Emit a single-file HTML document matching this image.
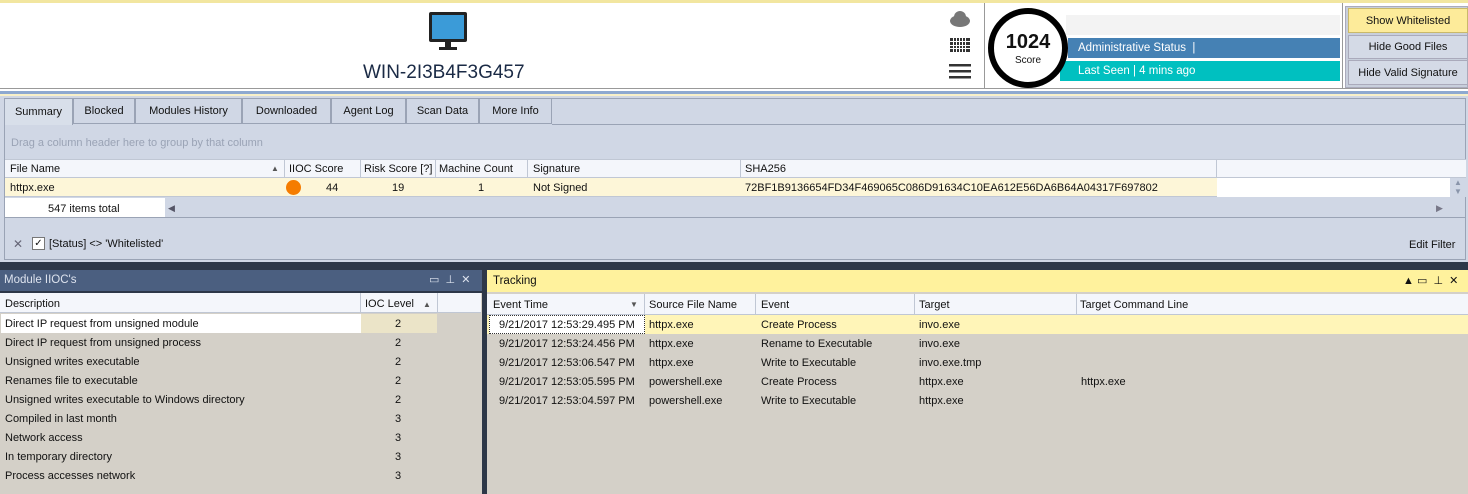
<!DOCTYPE html><html><head><style>
*{margin:0;padding:0;box-sizing:border-box}
body{width:1468px;height:494px;overflow:hidden;background:#2d3748;font-family:"Liberation Sans",sans-serif;font-size:11px;color:#111;position:relative}
div,span{position:absolute;white-space:nowrap}
.t{line-height:19px;padding-top:1px}
</style></head><body>
<div style="left:0;top:0;width:1468px;height:92px;background:#fff"></div>
<div style="left:0;top:0;width:1468px;height:3px;background:#f2e6a0"></div>
<div style="left:0;top:88px;width:1468px;height:1px;background:#999"></div>
<div style="left:0;top:91px;width:1468px;height:3px;background:#8ea9d0"></div>
<svg style="position:absolute;left:427px;top:11px" width="42" height="42"><rect x="2" y="1" width="38" height="30" rx="2" fill="#222"/><rect x="5" y="4" width="32" height="24" fill="#3b9bd8"/><rect x="18" y="31" width="6" height="6" fill="#222"/><rect x="12" y="36" width="18" height="3" fill="#222"/></svg>
<div style="left:363px;top:62px;font-size:19px;color:#1a2a45">WIN-2I3B4F3G457</div>
<svg style="position:absolute;left:948px;top:10px" width="24" height="72"><ellipse cx="12" cy="11" rx="10" ry="6" fill="#777"/><circle cx="12" cy="7" r="6" fill="#777"/><g fill="#333"><rect x="2" y="28" width="20" height="14"/></g><g stroke="#fff" stroke-width="1"><line x1="5.5" y1="28" x2="5.5" y2="42"/><line x1="8.5" y1="28" x2="8.5" y2="42"/><line x1="11.5" y1="28" x2="11.5" y2="42"/><line x1="14.5" y1="28" x2="14.5" y2="42"/><line x1="17.5" y1="28" x2="17.5" y2="42"/><line x1="2" y1="31.5" x2="22" y2="31.5"/><line x1="2" y1="35.5" x2="22" y2="35.5"/><line x1="2" y1="38.5" x2="22" y2="38.5"/></g><g fill="#333"><rect x="1" y="54" width="22" height="2.5"/><rect x="1" y="60" width="22" height="2.5"/><rect x="1" y="66" width="22" height="2.5"/></g></svg>
<div style="left:984px;top:3px;width:1px;height:86px;background:#999"></div>
<div style="left:1066px;top:15px;width:274px;height:20px;background:#f3f3f3"></div>
<div style="left:1068px;top:38px;width:272px;height:20px;background:#4581b4;color:#fff;font-size:11.5px;padding-left:10px;line-height:20px">Administrative Status &nbsp;|</div>
<div style="left:1060px;top:61px;width:280px;height:20px;background:#00c0c0;color:#fff;font-size:11.5px;padding-left:18px;line-height:20px">Last Seen | 4 mins ago</div>
<div style="left:988px;top:8px;width:80px;height:80px;border-radius:50%;background:#fff;border:6px solid #000"></div>
<div style="left:988px;top:31px;width:80px;text-align:center;font-size:20px;font-weight:bold">1024</div>
<div style="left:988px;top:55px;width:80px;text-align:center;font-size:10px">Score</div>
<div style="left:1342px;top:3px;width:1px;height:86px;background:#999"></div>
<div style="left:1345px;top:6px;width:123px;height:82px;background:#c8cfdc;border:1px solid #aab"></div>
<div style="left:1348px;top:8px;width:120px;height:25px;background:#fdeb9a;border:1px solid #c9b96a;text-align:center;line-height:24px">Show Whitelisted</div>
<div style="left:1348px;top:35px;width:120px;height:24px;background:#d4dae6;border:1px solid #aab;text-align:center;line-height:23px">Hide Good Files</div>
<div style="left:1348px;top:60px;width:120px;height:25px;background:#d4dae6;border:1px solid #aab;text-align:center;line-height:24px">Hide Valid Signature</div>
<div style="left:0;top:94px;width:1468px;height:168px;background:#d0d7e5"></div>
<div style="left:0;top:94px;width:1468px;height:2px;background:#f8f0c8"></div>
<div style="left:4px;top:98px;width:1462px;height:162px;border:1px solid #9aa3b5"></div>
<div style="left:5px;top:99px;width:68px;height:26px;background:#d8dfea;border-right:1px solid #9aa3b5;text-align:center;line-height:26px">Summary</div>
<div style="left:73px;top:99px;width:62px;height:25px;border:1px solid #9aa3b5;border-top:none;text-align:center;line-height:25px">Blocked</div>
<div style="left:135px;top:99px;width:107px;height:25px;border:1px solid #9aa3b5;border-top:none;text-align:center;line-height:25px">Modules History</div>
<div style="left:242px;top:99px;width:89px;height:25px;border:1px solid #9aa3b5;border-top:none;text-align:center;line-height:25px">Downloaded</div>
<div style="left:331px;top:99px;width:75px;height:25px;border:1px solid #9aa3b5;border-top:none;text-align:center;line-height:25px">Agent Log</div>
<div style="left:406px;top:99px;width:73px;height:25px;border:1px solid #9aa3b5;border-top:none;text-align:center;line-height:25px">Scan Data</div>
<div style="left:479px;top:99px;width:73px;height:25px;border:1px solid #9aa3b5;border-top:none;text-align:center;line-height:25px">More Info</div>
<div style="left:552px;top:124px;width:914px;height:1px;background:#9aa3b5"></div>
<div style="left:11px;top:137px;color:#9aa3b5">Drag a column header here to group by that column</div>
<div style="left:5px;top:159px;width:1461px;height:19px;background:#f4f6fb;border-top:1px solid #c0c7d4;border-bottom:1px solid #c0c7d4"></div>
<div class="t" style="left:10px;top:159px">File Name</div><div style="left:271px;top:159px;line-height:19px;font-size:8px;color:#555">▲</div>
<div style="left:284px;top:159px;width:1px;height:19px;background:#c0c7d4"></div><div class="t" style="left:289px;top:159px">IIOC Score</div>
<div style="left:360px;top:159px;width:1px;height:19px;background:#c0c7d4"></div><div class="t" style="left:364px;top:159px">Risk Score [?]</div>
<div style="left:435px;top:159px;width:1px;height:19px;background:#c0c7d4"></div><div class="t" style="left:439px;top:159px">Machine Count</div>
<div style="left:527px;top:159px;width:1px;height:19px;background:#c0c7d4"></div><div class="t" style="left:533px;top:159px">Signature</div>
<div style="left:740px;top:159px;width:1px;height:19px;background:#c0c7d4"></div><div class="t" style="left:745px;top:159px">SHA256</div>
<div style="left:1216px;top:159px;width:1px;height:19px;background:#c0c7d4"></div>
<div style="left:5px;top:178px;width:1212px;height:19px;background:#fdf6d8;border-bottom:1px solid #c0c7d4"></div>
<div style="left:1217px;top:178px;width:233px;height:19px;background:#fff"></div>
<div style="left:1450px;top:178px;width:16px;height:19px;background:#d0d7e5;color:#8a95aa;font-size:8px;line-height:9px;text-align:center">▲<br>▼</div>
<div class="t" style="left:10px;top:178px">httpx.exe</div>
<div style="left:286px;top:180px;width:15px;height:15px;border-radius:50%;background:#f57c00"></div>
<div class="t" style="left:326px;top:178px">44</div>
<div class="t" style="left:392px;top:178px">19</div>
<div class="t" style="left:478px;top:178px">1</div>
<div class="t" style="left:533px;top:178px">Not Signed</div>
<div class="t" style="left:745px;top:178px">72BF1B9136654FD34F469065C086D91634C10EA612E56DA6B64A04317F697802</div>
<div style="left:5px;top:198px;width:160px;height:19px;background:#fff"></div>
<div class="t" style="left:48px;top:199px">547 items total</div>
<div style="left:168px;top:199px;color:#556;font-size:9px;line-height:19px">◀</div>
<div style="left:1436px;top:199px;color:#778;font-size:9px;line-height:19px">▶</div>
<div style="left:5px;top:217px;width:1461px;height:1px;background:#9aa3b5"></div>
<div class="t" style="left:13px;top:234px;color:#667;font-size:12px">✕</div>
<div style="left:32px;top:237px;width:13px;height:13px;background:#fff;border:1px solid #777;font-size:10px;line-height:11px;text-align:center">✓</div>
<div class="t" style="left:49px;top:234px">[Status] &lt;&gt; 'Whitelisted'</div>
<div class="t" style="left:1409px;top:235px">Edit Filter</div>
<div style="left:0;top:270px;width:482px;height:21px;background:#4b5f80;color:#dde3ee;font-size:11.5px;line-height:21px;padding-left:4px">Module IIOC's</div>
<div style="left:429px;top:270px;color:#dde3ee;line-height:21px;font-size:11px">▭ &nbsp;⊥ &nbsp;✕</div>
<div style="left:0;top:293px;width:482px;height:201px;background:#d4d0c8"></div>
<div style="left:0;top:293px;width:481px;height:20px;background:#f4f6fb;border-bottom:1px solid #c0c7d4"></div>
<div class="t" style="left:5px;top:294px">Description</div>
<div style="left:360px;top:293px;width:1px;height:20px;background:#c0c7d4"></div><div class="t" style="left:365px;top:294px">IOC Level</div><div style="left:423px;top:295px;font-size:8px;line-height:19px;color:#555">▲</div>
<div style="left:437px;top:293px;width:1px;height:20px;background:#c0c7d4"></div>
<div style="left:1px;top:314px;width:360px;height:19px;background:#fff"></div>
<div style="left:361px;top:314px;width:76px;height:19px;background:#ebe4c8"></div>
<div style="left:0;top:314px;width:437px">
<div class="t" style="left:5px;top:0">Direct IP request from unsigned module</div><div class="t" style="left:395px;top:0">2</div>
<div class="t" style="left:5px;top:19px">Direct IP request from unsigned process</div><div class="t" style="left:395px;top:19px">2</div>
<div class="t" style="left:5px;top:38px">Unsigned writes executable</div><div class="t" style="left:395px;top:38px">2</div>
<div class="t" style="left:5px;top:57px">Renames file to executable</div><div class="t" style="left:395px;top:57px">2</div>
<div class="t" style="left:5px;top:76px">Unsigned writes executable to Windows directory</div><div class="t" style="left:395px;top:76px">2</div>
<div class="t" style="left:5px;top:95px">Compiled in last month</div><div class="t" style="left:395px;top:95px">3</div>
<div class="t" style="left:5px;top:114px">Network access</div><div class="t" style="left:395px;top:114px">3</div>
<div class="t" style="left:5px;top:133px">In temporary directory</div><div class="t" style="left:395px;top:133px">3</div>
<div class="t" style="left:5px;top:152px">Process accesses network</div><div class="t" style="left:395px;top:152px">3</div>
</div>
<div style="left:487px;top:270px;width:981px;height:22px;background:#fff29d;font-size:11.5px;line-height:22px;padding-left:6px">Tracking</div>
<div style="left:1403px;top:270px;line-height:22px;font-size:11px">▲ ▭ &nbsp;⊥ &nbsp;✕</div>
<div style="left:487px;top:292px;width:981px;height:202px;background:#d4d0c8"></div>
<div style="left:487px;top:294px;width:981px;height:21px;background:#f4f6fb;border-bottom:1px solid #c0c7d4"></div>
<div class="t" style="left:493px;top:295px">Event Time</div><div style="left:630px;top:295px;font-size:8px;line-height:19px;color:#555">▼</div>
<div style="left:644px;top:294px;width:1px;height:21px;background:#c0c7d4"></div><div class="t" style="left:649px;top:295px">Source File Name</div>
<div style="left:755px;top:294px;width:1px;height:21px;background:#c0c7d4"></div><div class="t" style="left:761px;top:295px">Event</div>
<div style="left:914px;top:294px;width:1px;height:21px;background:#c0c7d4"></div><div class="t" style="left:919px;top:295px">Target</div>
<div style="left:1076px;top:294px;width:1px;height:21px;background:#c0c7d4"></div><div class="t" style="left:1080px;top:295px">Target Command Line</div>
<div style="left:487px;top:315px;width:981px;height:19px;background:#fff5b8"></div>
<div style="left:489px;top:315px;width:156px;height:19px;background:#fff;border:1px dotted #333"></div>
<div style="left:487px;top:315px;width:981px">
<div class="t" style="left:12px;top:0">9/21/2017 12:53:29.495 PM</div><div class="t" style="left:162px;top:0">httpx.exe</div><div class="t" style="left:274px;top:0">Create Process</div><div class="t" style="left:432px;top:0">invo.exe</div>
<div class="t" style="left:12px;top:19px">9/21/2017 12:53:24.456 PM</div><div class="t" style="left:162px;top:19px">httpx.exe</div><div class="t" style="left:274px;top:19px">Rename to Executable</div><div class="t" style="left:432px;top:19px">invo.exe</div>
<div class="t" style="left:12px;top:38px">9/21/2017 12:53:06.547 PM</div><div class="t" style="left:162px;top:38px">httpx.exe</div><div class="t" style="left:274px;top:38px">Write to Executable</div><div class="t" style="left:432px;top:38px">invo.exe.tmp</div>
<div class="t" style="left:12px;top:57px">9/21/2017 12:53:05.595 PM</div><div class="t" style="left:162px;top:57px">powershell.exe</div><div class="t" style="left:274px;top:57px">Create Process</div><div class="t" style="left:432px;top:57px">httpx.exe</div><div class="t" style="left:594px;top:57px">httpx.exe</div>
<div class="t" style="left:12px;top:76px">9/21/2017 12:53:04.597 PM</div><div class="t" style="left:162px;top:76px">powershell.exe</div><div class="t" style="left:274px;top:76px">Write to Executable</div><div class="t" style="left:432px;top:76px">httpx.exe</div>
</div>
</body></html>
